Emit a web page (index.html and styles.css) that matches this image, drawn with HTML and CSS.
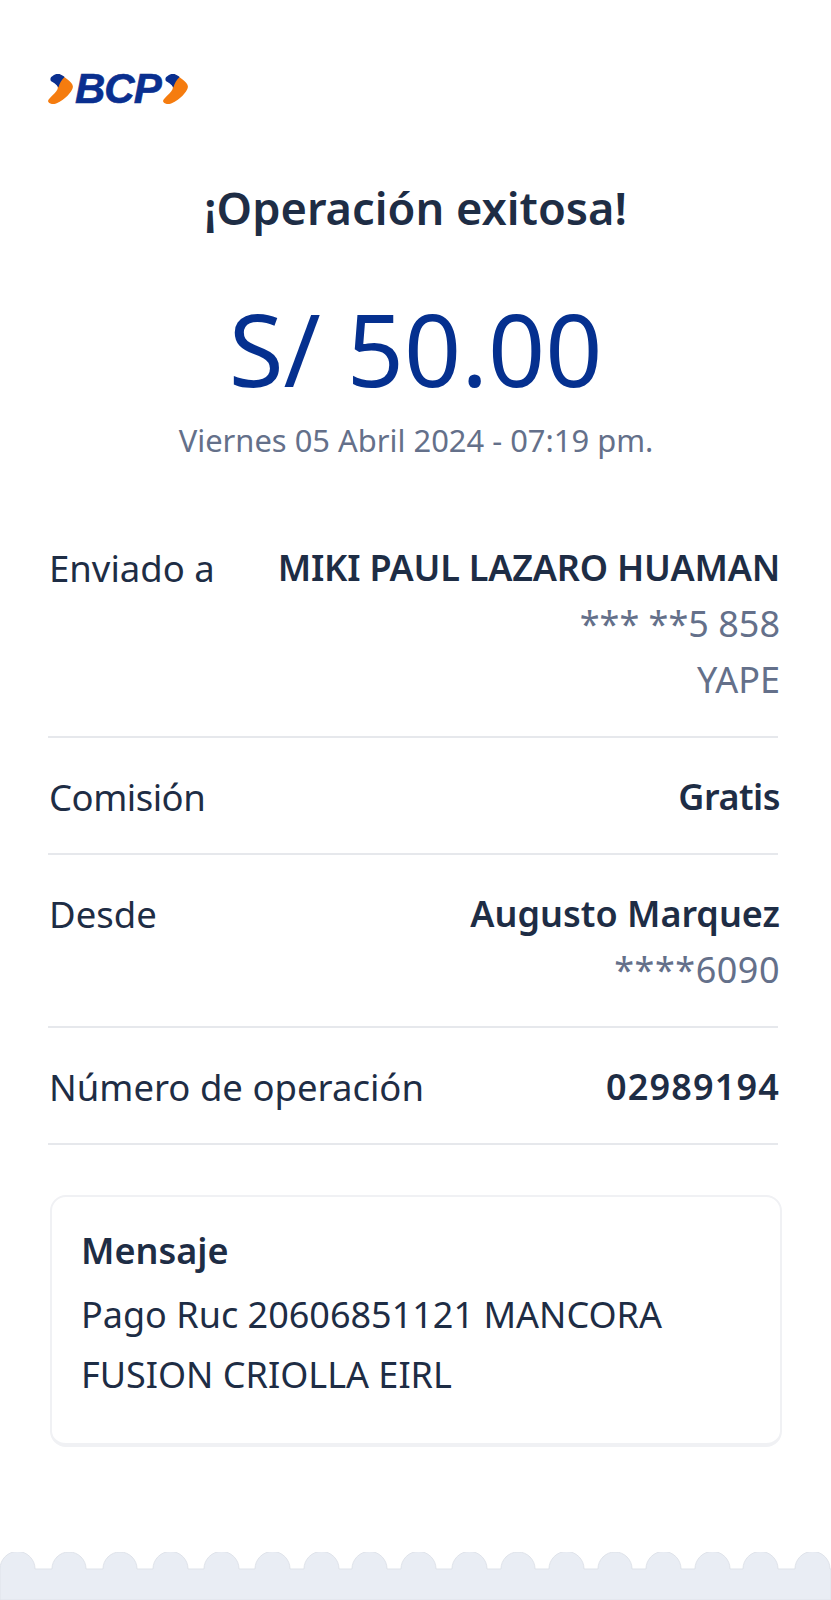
FILE: index.html
```html
<!DOCTYPE html>
<html lang="es">
<head>
<meta charset="utf-8">
<title>Operación exitosa</title>
<link rel="stylesheet" href="styles.css">
</head>
<body>
<main class="page">
  <header class="logo">
    <svg class="chev" viewBox="0 0 24 29"><path class="o" d="M10 0 C15 2 24 8 24 12 C24 18 12 28 6 29 C3 29 0 28 0 26 C0 24 6 20 9 15 C10 13 9 11 8 10 Z"/><path class="b" d="M3 3 C5 1 9 -1 11 0 C13 1 15 2 16 3 C13 6 11 9 10 13 C8 10 5 8 3 7 C2 6 2 4 3 3 Z"/></svg>
    <span class="logo-text">BCP</span>
    <svg class="chev" viewBox="0 0 24 29"><path class="o" d="M10 0 C15 2 24 8 24 12 C24 18 12 28 6 29 C3 29 0 28 0 26 C0 24 6 20 9 15 C10 13 9 11 8 10 Z"/><path class="b" d="M3 3 C5 1 9 -1 11 0 C13 1 15 2 16 3 C13 6 11 9 10 13 C8 10 5 8 3 7 C2 6 2 4 3 3 Z"/></svg>
  </header>
  <h1 class="title">¡Operación exitosa!</h1>
  <p class="amount">S/ 50.00</p>
  <p class="date">Viernes 05 Abril 2024 - 07:19 pm.</p>
  <section class="rows">
    <div class="row">
      <span class="label">Enviado a</span>
      <div class="value"><strong class="tight">MIKI PAUL LAZARO HUAMAN</strong><span>*** **5 858</span><span>YAPE</span></div>
    </div>
    <div class="row">
      <span class="label narrow">Comisión</span>
      <div class="value"><strong class="narrow">Gratis</strong></div>
    </div>
    <div class="row">
      <span class="label">Desde</span>
      <div class="value"><strong>Augusto Marquez</strong><span class="wide">****6090</span></div>
    </div>
    <div class="row">
      <span class="label">Número de operación</span>
      <div class="value"><strong class="wider">02989194</strong></div>
    </div>
  </section>
  <section class="card">
    <h2 class="card-title">Mensaje</h2>
    <p class="card-text">Pago Ruc 20606851121 MANCORA<br>FUSION CRIOLLA EIRL</p>
  </section>
</main>
<footer class="edge">
  <svg class="scallop" viewBox="0 0 831 48" width="831" height="48"><path d="M0 48V17A17.5 17.5 0 0 1 35 17H52A17 17 0 0 1 86 17H103A17 17 0 0 1 137 17H153A17.5 17.5 0 0 1 188 17H204A17.5 17.5 0 0 1 239 17H255A17.5 17.5 0 0 1 290 17H304A17.5 17.5 0 0 1 339 17H352A17.5 17.5 0 0 1 387 17H401A17.5 17.5 0 0 1 436 17H452A17.5 17.5 0 0 1 487 17H501A17 17 0 0 1 535 17H549A17.5 17.5 0 0 1 584 17H598A17 17 0 0 1 632 17H646A17.5 17.5 0 0 1 681 17H695A17.5 17.5 0 0 1 730 17H743A17.5 17.5 0 0 1 778 17H795A17.5 17.5 0 0 1 830 17H831V48Z"/></svg>
</footer>
</body>
</html>
```
FILE: styles.css
```css
* { box-sizing: border-box; }
html, body { margin: 0; height: 1600px; overflow: hidden; background: #fff; }
body { font-family: "Noto Sans", "Open Sans", sans-serif; color: #1e2d45; position: relative; }
.page { padding: 70px 50px 0 48px; }
.logo { display: flex; align-items: center; gap: 2px; height: 38px; }
.chev { width: 25px; height: 30px; flex: none; }
.chev .o { fill: #f57c0f; }
.chev .b { fill: #0a2f8f; }
.logo-text { font-family: "Liberation Sans", sans-serif; font-weight: 700; font-style: italic; font-size: 42px; line-height: 38px; letter-spacing: -1px; color: #0a2f8f; -webkit-text-stroke: 0.6px #0a2f8f; }
.title { margin: 76px 0 0; padding-left: 2px; text-align: center; font-size: 45.2px; line-height: 48px; font-weight: 600; color: #1e2d45; }
.amount { margin: 61px 0 0; padding-left: 2px; text-align: center; font-size: 100px; line-height: 110px; font-weight: 400; color: #05308f; }
.date { margin: 17px 0 0; padding-left: 3px; text-align: center; font-size: 30.9px; line-height: 40px; color: #64708a; }
.rows { margin: 49px 3px 0 0; }
.row { display: flex; justify-content: space-between; padding: 31px 0 28px; border-bottom: 2px solid #e6e8ec; line-height: 56px; }
.label { padding-left: 1px; font-size: 36.5px; white-space: nowrap; }
.value { display: flex; flex-direction: column; align-items: flex-end; margin-right: -2px; text-align: right; font-size: 36px; color: #64708a; white-space: nowrap; }
.value strong { font-weight: 600; color: #1e2d45; }
.tight { letter-spacing: -0.2px; }
.narrow { letter-spacing: -0.5px; }
.wide { letter-spacing: 0.5px; }
.wider { letter-spacing: 1.15px; }
.card { margin: 50px -1px 0 2px; height: 252px; padding: 28px 29px; background: #fff; border: 2px solid #f0f1f4; border-bottom-width: 4px; border-radius: 16px; }
.card-title { margin: 0; font-size: 36px; line-height: 52px; font-weight: 600; }
.card-text { margin: 8px 0 0; font-size: 36px; line-height: 60px; }
.edge { position: absolute; left: 0; right: 0; bottom: 0; height: 48px; }
.scallop { display: block; }
.scallop path { fill: #e9edf4; stroke: #dfe3ea; stroke-width: 1; }
```
